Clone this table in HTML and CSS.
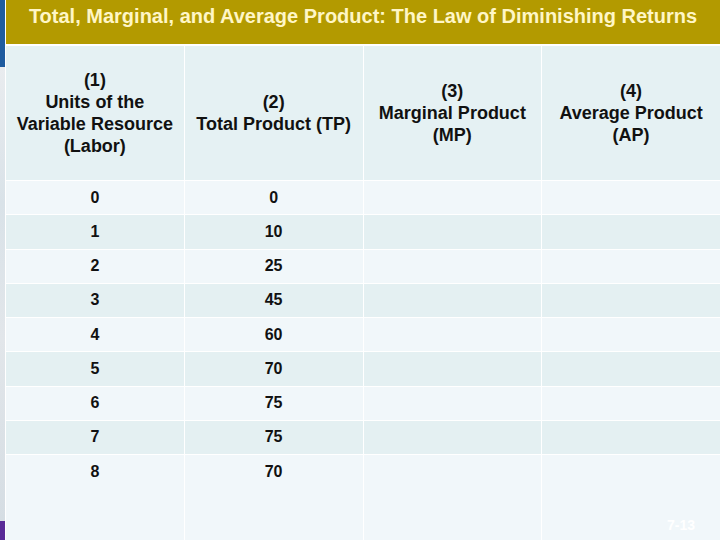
FILE: index.html
```html
<!DOCTYPE html>
<html>
<head>
<meta charset="utf-8">
<link rel="stylesheet" href="styles.css">
</head>
<body>
<div class="slide">
  <div class="strip">
    <div class="strip-blue"></div>
    <div class="strip-mid"></div>
    <div class="strip-purple"></div>
  </div>
  <div class="main">
    <div class="title">Total, Marginal, and Average Product: The Law of Diminishing Returns</div>
    <div class="table">
      <div class="cell head">(1)<br>Units of the<br>Variable Resource<br>(Labor)</div>
      <div class="cell head">(2)<br>Total Product (TP)</div>
      <div class="cell head">(3)<br>Marginal Product<br>(MP)</div>
      <div class="cell head">(4)<br>Average Product<br>(AP)</div>

      <div class="cell light">0</div><div class="cell light">0</div><div class="cell light"></div><div class="cell light"></div>
      <div class="cell dark">1</div><div class="cell dark">10</div><div class="cell dark"></div><div class="cell dark"></div>
      <div class="cell light">2</div><div class="cell light">25</div><div class="cell light"></div><div class="cell light"></div>
      <div class="cell dark">3</div><div class="cell dark">45</div><div class="cell dark"></div><div class="cell dark"></div>
      <div class="cell light">4</div><div class="cell light">60</div><div class="cell light"></div><div class="cell light"></div>
      <div class="cell dark">5</div><div class="cell dark">70</div><div class="cell dark"></div><div class="cell dark"></div>
      <div class="cell light">6</div><div class="cell light">75</div><div class="cell light"></div><div class="cell light"></div>
      <div class="cell dark">7</div><div class="cell dark">75</div><div class="cell dark"></div><div class="cell dark"></div>
      <div class="cell light last">8</div><div class="cell light last">70</div><div class="cell light last"></div><div class="cell light last"></div>
    </div>
  </div>
  <div class="pagenum">7-13</div>
</div>
</body>
</html>
```

FILE: styles.css
```css
html, body {
  margin: 0;
  padding: 0;
}

body {
  width: 720px;
  height: 540px;
  overflow: hidden;
  font-family: "Liberation Sans", Arial, sans-serif;
  background: #ffffff;
}

.slide {
  position: relative;
  display: flex;
  width: 720px;
  height: 540px;
}

.strip {
  width: 5px;
  margin-right: 1px;
  display: flex;
  flex-direction: column;
}

.strip-blue {
  height: 67px;
  background: #1f5c9f;
}

.strip-mid {
  flex: 1;
  background: linear-gradient(180deg, #e9ecef 0%, #d9e2e8 30%, #e2e6ea 60%, #d5dde3 100%);
}

.strip-purple {
  height: 19px;
  background: #5a2b98;
}

.main {
  flex: 1;
  display: flex;
  flex-direction: column;
  background: #ffffff;
}

.title {
  height: 44px;
  box-sizing: border-box;
  padding-top: 5px;
  background: #b39a00;
  color: #fff6c6;
  font-weight: bold;
  font-size: 20px;
  text-align: center;
  margin-bottom: 2px;
  white-space: nowrap;
}

.table {
  flex: 1;
  display: grid;
  grid-template-columns: repeat(4, 1fr);
  grid-template-rows: 134px repeat(8, 33.25px) 1fr;
  gap: 1px;
  background: #ffffff;
}

.cell {
  display: flex;
  align-items: center;
  justify-content: center;
  text-align: center;
  color: #111111;
  font-weight: bold;
  font-size: 16px;
}

.cell.last {
  align-items: flex-start;
  padding-top: 8px;
}

.head {
  background: #e5f1f3;
  font-size: 18px;
  line-height: 22px;
}

.light {
  background: #f1f7fa;
}

.dark {
  background: #e4f0f2;
}

.pagenum {
  position: absolute;
  right: 25px;
  bottom: 7px;
  color: #ffffff;
  font-size: 14px;
  font-weight: bold;
}
```
